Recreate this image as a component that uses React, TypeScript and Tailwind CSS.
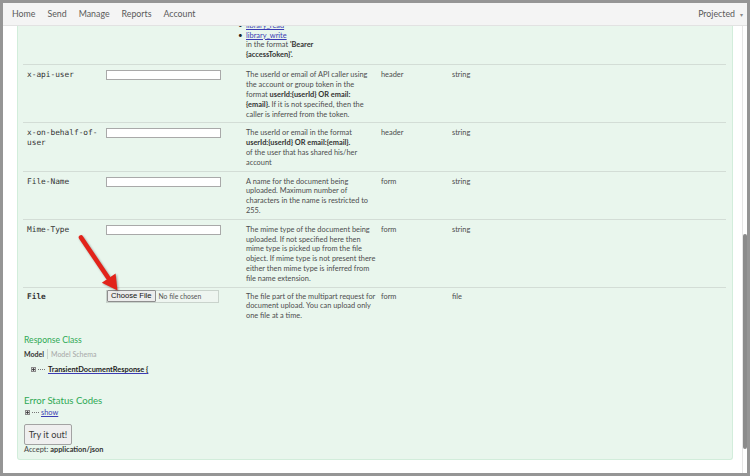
import React from "react";

const sans = "font-[family-name:Lato,'Noto_Sans',sans-serif]";
const mono = "font-[family-name:'DejaVu_Sans_Mono','Liberation_Mono',monospace]";

type RowProps = {
  name: React.ReactNode;
  control?: React.ReactNode;
  desc: React.ReactNode[];
  ptype: string;
  dtype: string;
  last?: boolean;
  bold?: boolean;
  pt?: string;
};

function Row({ name, control, desc, ptype, dtype, last, bold, pt }: RowProps) {
  return (
    <div
      className={`grid grid-cols-[83px_140px_135px_71px_1fr] ${pt ?? "pt-[5px]"} pb-[3px] ${
        last ? "" : "border-b border-[#d3ddd6]"
      }`}
    >
      <div
        className={`${mono} pl-[4px] text-[7.8px] leading-[9.8px] text-[#333] ${bold ? "font-bold" : ""}`}
      >
        {name}
      </div>
      <div>{control}</div>
      <div className="text-[7.4px] leading-[9.8px] text-[#4d4d4d]">
        {desc.map((d, i) => (
          <div key={i} className="whitespace-nowrap">
            {d}
          </div>
        ))}
      </div>
      <div className="text-[7.4px] leading-[9.8px] text-[#4d4d4d]">{ptype}</div>
      <div className="text-[7.4px] leading-[9.8px] text-[#4d4d4d]">{dtype}</div>
    </div>
  );
}

function TextInput() {
  return <div className="w-[115px] h-[10px] bg-white border border-[#a9a9a9]" />;
}

function PlusBox() {
  return (
    <span className="inline-flex items-center justify-center w-[5px] h-[5px] border border-[#8a8a8a] bg-[#ddd]">
      <svg width="3" height="3" viewBox="0 0 3 3">
        <path d="M0 1.5H3M1.5 0V3" stroke="#333" strokeWidth="0.8" />
      </svg>
    </span>
  );
}

function Dots({ w }: { w: string }) {
  return <span className={`${w} h-0 border-t border-dotted border-[#777]`} />;
}

export default function App() {
  return (
    <div className={`relative w-[750px] h-[476px] bg-[#959595] p-[3px] overflow-hidden ${sans}`}>
      <div className="flex flex-col h-[470px] bg-white">
        {/* navbar */}
        <div className="h-[23px] shrink-0 flex items-center justify-between bg-[#f4f4f4] border-b border-[#e2e2e2] pl-[9px] pr-[4px] text-[8.8px] text-[#5a5a5a]">
          <div className="flex gap-[12px]">
            <span>Home</span>
            <span>Send</span>
            <span>Manage</span>
            <span>Reports</span>
            <span>Account</span>
          </div>
          <div className="flex items-center gap-[5px]">
            <span>Projected</span>
            <span className="text-[6px] text-[#888]">▾</span>
          </div>
        </div>

        <div className="flex flex-1 min-h-0">
          {/* main scroll area */}
          <div className="flex-1 overflow-hidden pl-[14px] pr-[9px]">
            <div className="bg-[#e9f6ed] border border-t-0 border-[#d2eddb] rounded-b-[3px] pl-[5px] pr-[6px] pb-[4px]">
              {/* partial top row */}
              <div className="grid grid-cols-[83px_140px_135px_71px_1fr] mt-[-5px] pb-[5px] border-b border-[#d3ddd6]">
                <div />
                <div />
                <div className="text-[7.4px] leading-[9.6px] text-[#4d4d4d]">
                  <div className="flex items-center">
                    <span className="w-[8px] ml-[-8px] text-[8px] text-[#222]">•</span>
                    <span className="text-[#3c3cb4] underline">library_read</span>
                  </div>
                  <div className="flex items-center">
                    <span className="w-[8px] ml-[-8px] text-[8px] text-[#222]">•</span>
                    <span className="text-[#3c3cb4] underline">library_write</span>
                  </div>
                  <div className="whitespace-nowrap">
                    in the format <b className="text-[#333]">'Bearer</b>
                  </div>
                  <div className="whitespace-nowrap">
                    <b className="text-[#333]">{"{accessToken}'."}</b>
                  </div>
                </div>
                <div />
                <div />
              </div>

              <Row
                name="x-api-user"
                control={<TextInput />}
                desc={[
                  "The userId or email of API caller using",
                  "the account or group token in the",
                  <>
                    format <b className="text-[#333]">{"userId:{userId} OR email:"}</b>
                  </>,
                  <>
                    <b className="text-[#333]">{"{email}."}</b> If it is not specified, then the
                  </>,
                  "caller is inferred from the token.",
                ]}
                ptype="header"
                dtype="string"
              />
              <Row
                name={
                  <>
                    <div>x-on-behalf-of-</div>
                    <div>user</div>
                  </>
                }
                control={<TextInput />}
                desc={[
                  "The userId or email in the format",
                  <b className="text-[#333]">{"userId:{userId} OR email:{email}."}</b>,
                  "of the user that has shared his/her",
                  "account",
                ]}
                ptype="header"
                dtype="string"
              />
              <Row
                name="File-Name"
                control={<TextInput />}
                desc={[
                  "A name for the document being",
                  "uploaded. Maximum number of",
                  "characters in the name is restricted to",
                  "255.",
                ]}
                ptype="form"
                dtype="string"
              />
              <Row
                name="Mime-Type"
                control={<TextInput />}
                desc={[
                  "The mime type of the document being",
                  "uploaded. If not specified here then",
                  "mime type is picked up from the file",
                  "object. If mime type is not present there",
                  "either then mime type is inferred from",
                  "file name extension.",
                ]}
                ptype="form"
                dtype="string"
              />
              <Row
                name="File"
                bold
                pt="pt-[4px]"
                last
                control={
                  <div className="mt-[-2px] w-[113px] h-[13px] flex items-center border border-[#c9d3cc] bg-[#eef5f0]">
                    <div className="h-[12px] px-[3px] flex items-center bg-[#ececec] border border-[#8e8e8e] rounded-[1px] text-[7.6px] text-[#111] font-[family-name:Arial,'Liberation_Sans',sans-serif]">
                      Choose File
                    </div>
                    <span className="ml-[3px] text-[6.8px] text-[#555]">No file chosen</span>
                  </div>
                }
                desc={[
                  "The file part of the multipart request for",
                  "document upload. You can upload only",
                  "one file at a time.",
                ]}
                ptype="form"
                dtype="file"
              />

              {/* response class */}
              <div className="mt-[10px] pl-[1px] text-[8.6px] leading-[12px] text-[#2fa955]">Response Class</div>
              <div className="mt-[3px] pl-[1px] flex items-center text-[7px] leading-[10px]">
                <span className="font-bold text-[#333] pr-[3px] border-r border-[#cdd6d0]">Model</span>
                <span className="pl-[3px] text-[#a7a7a7]">Model Schema</span>
              </div>
              <div className="mt-[6px] pl-[8px] flex items-center gap-[2px] text-[7.4px] leading-[10px]">
                <PlusBox />
                <Dots w="w-[7px]" />
                <span className="ml-[1px] font-bold text-[#222] underline decoration-[#3c3cb4]">
                  TransientDocumentResponse {"{"}
                </span>
              </div>

              {/* error status codes */}
              <div className="mt-[19px] pl-[1px] text-[9.6px] leading-[13px] text-[#2fa955]">Error Status Codes</div>
              <div className="mt-[1px] pl-[2px] flex items-center gap-[2px] text-[7.4px] leading-[9px]">
                <PlusBox />
                <Dots w="w-[7px]" />
                <span className="text-[#3c3cb4] underline">show</span>
              </div>
              <div className="mt-[7px] pl-[1px]">
                <div className="w-[48px] h-[21px] flex items-center justify-center bg-[#efefef] border border-[#a3a3a3] rounded-[2px] text-[9.2px] text-[#3a3a3a]">
                  Try it out!
                </div>
              </div>
              <div className="pl-[1px] text-[7.4px] leading-[10px] text-[#444]">
                Accept: <b className="text-[#333]">application/json</b>
              </div>
            </div>
          </div>

          {/* scrollbar */}
          <div className="w-[5px] shrink-0 border-l border-[#e6e6e6] bg-white pt-[208px]">
            <div className="w-[4px] h-[215px] bg-[#8b8b8b] rounded-[2px]" />
          </div>
        </div>
      </div>

      {/* red arrow annotation */}
      <svg
        className="absolute left-0 top-0 pointer-events-none drop-shadow-[1px_1px_1px_rgba(0,0,0,0.35)]"
        width="750"
        height="476"
        viewBox="0 0 750 476"
      >
        <line x1="81" y1="237.5" x2="108" y2="277.5" stroke="#e2231a" strokeWidth="4.6" strokeLinecap="round" />
        <polygon points="117.5,290.5 101.8,282.8 115.6,273.4" fill="#e2231a" />
      </svg>
    </div>
  );
}
